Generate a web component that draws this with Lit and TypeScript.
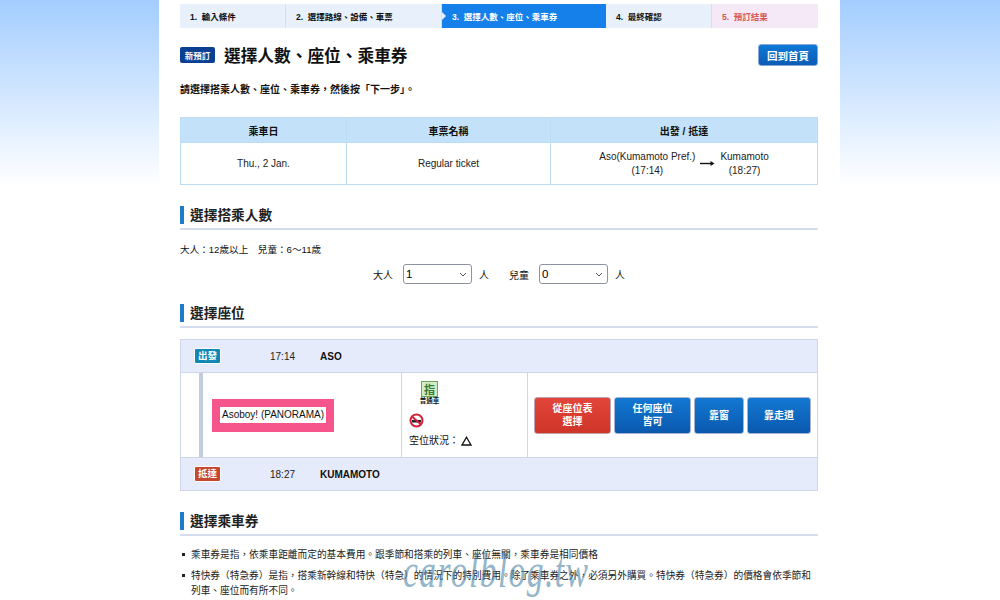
import { LitElement, css, html } from 'lit';
import { customElement } from 'lit/decorators.js';

const steps = [
  { label: '1.  輸入條件', width: 106, kind: '' },
  { label: '2.  選擇路線、設備、車票', width: 156, kind: '' },
  { label: '3.  選擇人數、座位、乘車券', width: 164, kind: 'active' },
  { label: '4.  最終確認', width: 106, kind: '' },
  { label: '5.  預訂結果', width: 106, kind: 'last' },
];

@customElement('app-root')
export class AppRoot extends LitElement {
  static styles = css`
    :host {
      display: block;
      height: 600px;
      overflow: hidden;
      position: relative;
      font-family: 'Liberation Sans', 'Noto Sans CJK TC', sans-serif;
      color: #111;
      background: linear-gradient(#a3cdff 0, #fff 186px);
    }
    .page {
      box-sizing: border-box;
      width: 681px;
      height: 600px;
      margin-left: 159px;
      padding: 4px 22px 0 21px;
      background: #fff;
    }

    /* 步驟 */
    .steps {
      display: flex;
      height: 24px;
    }
    .step {
      box-sizing: border-box;
      position: relative;
      display: flex;
      align-items: center;
      padding-left: 10px;
      font-size: 8.5px;
      font-weight: 700;
      white-space: pre;
      background: #e8f0fb;
      border-right: 1px solid #d6deea;
    }
    .step.active {
      background: #1580ea;
      color: #fff;
      border-right: none;
    }
    .step.last {
      background: #f6e9f7;
      color: #d8564e;
      border-right: none;
    }
    .step.active::after {
      content: '';
      position: absolute;
      right: -4px;
      top: 8px;
      border-left: 4px solid #1580ea;
      border-top: 4px solid transparent;
      border-bottom: 4px solid transparent;
    }
    .step.active::before {
      content: '';
      position: absolute;
      left: 0;
      top: 8px;
      border-left: 4px solid #e8f0fb;
      border-top: 4px solid transparent;
      border-bottom: 4px solid transparent;
    }

    /* 標題 */
    .title-row {
      display: flex;
      align-items: center;
      height: 22px;
      margin-top: 16px;
    }
    .badge {
      display: flex;
      align-items: center;
      justify-content: center;
      width: 35px;
      height: 16px;
      border-radius: 2px;
      background: #0b3f92;
      color: #fff;
      font-size: 8.5px;
      font-weight: 700;
      margin-right: 9px;
    }
    h1 {
      flex: 1;
      margin: 0;
      font-size: 16.7px;
      font-weight: 700;
    }
    .home {
      box-sizing: border-box;
      width: 60px;
      height: 22px;
      border: 1px solid #86a9da;
      border-radius: 3px;
      background: linear-gradient(#0f78d6, #0a5cb4);
      color: #fff;
      font-family: inherit;
      font-size: 10.5px;
      font-weight: 700;
      padding: 0;
    }
    .lead {
      margin: 16px 0 0;
      font-size: 10px;
      line-height: 16px;
      font-weight: 700;
    }

    /* 行程表 */
    table {
      box-sizing: border-box;
      width: 638px;
      margin-top: 19px;
      border-collapse: collapse;
      table-layout: fixed;
      font-size: 10px;
    }
    th,
    td {
      border: 1px solid #bcdcf4;
      text-align: center;
      padding: 0;
    }
    th {
      height: 24px;
      background: #c3e1f8;
      font-weight: 700;
    }
    td {
      height: 41px;
      line-height: 14px;
      color: #222;
    }
    .route {
      display: flex;
      align-items: center;
      justify-content: center;
      gap: 5px;
    }

    /* 區段標題 */
    h2 {
      margin: 0;
      height: 18px;
      padding-left: 6px;
      border-left: 4px solid #1c7cc7;
      font-size: 13.7px;
      line-height: 20px;
      font-weight: 700;
      color: #222;
    }
    .rule {
      height: 2px;
      margin-top: 4px;
      background: #d5dcee;
    }
    .first {
      margin-top: 21px;
    }
    .ages {
      margin: 13px 0 0;
      font-size: 9.6px;
      line-height: 14px;
    }
    .counts {
      display: flex;
      align-items: center;
      height: 20px;
      margin-top: 7px;
      padding-left: 193px;
      font-size: 10px;
    }
    select {
      box-sizing: border-box;
      appearance: none;
      width: 69px;
      height: 20px;
      margin: 0 7px 0 10px;
      padding: 0 0 0 2px;
      border: 1.5px solid #8d93a3;
      border-radius: 3px;
      background: #fff
        url("data:image/svg+xml,%3Csvg xmlns='http://www.w3.org/2000/svg' width='8' height='5'%3E%3Cpath d='M1 1l3 3 3-3' fill='none' stroke='%23555' stroke-width='1'/%3E%3C/svg%3E")
        no-repeat right 4px center;
      font-family: inherit;
      font-size: 11.5px;
    }
    .gap {
      width: 20px;
    }
    .second {
      margin-top: 20px;
    }
    .third {
      margin-top: 21px;
    }

    /* 列車 */
    .train {
      box-sizing: border-box;
      height: 152px;
      margin-top: 11px;
      border: 1px solid #cfd6ea;
      font-size: 10px;
    }
    .stop {
      display: flex;
      align-items: center;
      height: 32px;
      background: #e6ebfb;
    }
    .tag {
      box-sizing: border-box;
      width: 27px;
      height: 16px;
      margin-left: 13px;
      border: 1px solid #fff;
      border-radius: 2px;
      color: #fff;
      font-size: 9.5px;
      line-height: 14px;
      text-align: center;
      font-weight: 700;
    }
    .tag.dep {
      background: #1187b4;
    }
    .tag.arr {
      background: #c5472f;
    }
    .time {
      width: 50px;
      margin-left: 49px;
      color: #222;
    }
    .name {
      font-weight: 700;
    }
    .middle {
      box-sizing: border-box;
      display: grid;
      grid-template-columns: 221px 126px 1fr;
      height: 86px;
      border-top: 1px solid #cfd6ea;
      border-bottom: 1px solid #cfd6ea;
    }
    .line {
      display: flex;
      align-items: center;
      border-right: 1px solid #cfd6ea;
    }
    .rail {
      align-self: stretch;
      width: 4px;
      margin-left: 18px;
      background: #c3cbe0;
    }
    .pink {
      display: flex;
      align-items: center;
      justify-content: center;
      width: 122px;
      height: 33px;
      margin-left: 9px;
      background: #f5558a;
    }
    .pink span {
      padding: 0 2px;
      background: #fff;
      line-height: 16px;
    }
    .facts {
      display: flex;
      flex-direction: column;
      align-items: flex-start;
      padding: 8px 0 0 7px;
      border-right: 1px solid #cfd6ea;
    }
    .car {
      display: flex;
      flex-direction: column;
      align-items: center;
      width: 41px;
    }
    .seat {
      box-sizing: border-box;
      display: flex;
      align-items: center;
      justify-content: center;
      width: 17px;
      height: 16px;
      background: #d5eac8;
      border: 1.5px solid #6aa85c;
      color: #2f7d32;
      font-size: 11px;
      font-weight: 700;
    }
    .car small {
      font-size: 6.5px;
      line-height: 8px;
      font-weight: 700;
      white-space: nowrap;
    }
    .smoke {
      margin-top: 8px;
      height: 15px;
    }
    .vacancy {
      display: flex;
      align-items: center;
      gap: 2px;
      margin-top: 6px;
      line-height: 14px;
    }
    .actions {
      display: flex;
      align-items: center;
      gap: 3px;
      padding-left: 6px;
    }
    .pick {
      box-sizing: border-box;
      height: 37px;
      padding: 0;
      border: 1px solid #a6b4d2;
      border-radius: 3px;
      background: linear-gradient(#1378d2, #0a58ae);
      color: #fff;
      font-family: inherit;
      font-size: 10px;
      line-height: 13px;
      font-weight: 700;
    }
    .pick.red {
      background: linear-gradient(#e2463a, #cf3428);
      border-color: #c2a3ad;
    }

    /* 說明 */
    ul {
      list-style: none;
      margin: 11px 0 0;
      padding: 0;
      font-size: 9.7px;
      line-height: 15px;
      color: #222;
    }
    li {
      position: relative;
      padding-left: 11px;
      margin-bottom: 6px;
    }
    li::before {
      content: '';
      position: absolute;
      left: 2px;
      top: 6px;
      width: 3px;
      height: 3px;
      background: #222;
    }

    /* 浮水印 */
    .mark {
      position: absolute;
      left: 403px;
      top: 541px;
      font-family: 'Liberation Serif', serif;
      font-style: italic;
      font-size: 48px;
      line-height: 60px;
      letter-spacing: 2px;
      color: #4f86a8;
      opacity: 0.6;
      transform: scaleX(0.7);
      transform-origin: left top;
      white-space: nowrap;
      pointer-events: none;
    }
  `;

  render() {
    return html`
      <div class="page">
        <div class="steps">
          ${steps.map(
            (s) =>
              html`<div class="step ${s.kind}" style="width:${s.width}px">${s.label}</div>`,
          )}
        </div>

        <div class="title-row">
          <span class="badge">新預訂</span>
          <h1>選擇人數、座位、乘車券</h1>
          <button class="home">回到首頁</button>
        </div>
        <p class="lead">請選擇搭乘人數、座位、乘車券，然後按「下一步」。</p>

        <table>
          <colgroup>
            <col style="width:166px" />
            <col style="width:204px" />
            <col />
          </colgroup>
          <tr>
            <th>乘車日</th>
            <th>車票名稱</th>
            <th>出發 / 抵達</th>
          </tr>
          <tr>
            <td>Thu., 2 Jan.</td>
            <td>Regular ticket</td>
            <td>
              <div class="route">
                <span>Aso(Kumamoto Pref.)<br />(17:14)</span>
                <svg width="15" height="7" viewBox="0 0 15 7">
                  <path d="M0 3.5h11" stroke="#111" stroke-width="1.4" />
                  <path d="M10.5 1l4 2.5-4 2.5z" fill="#111" />
                </svg>
                <span>Kumamoto<br />(18:27)</span>
              </div>
            </td>
          </tr>
        </table>

        <h2 class="first">選擇搭乘人數</h2>
        <div class="rule"></div>
        <p class="ages">大人：12歲以上　兒童：6～11歲</p>
        <div class="counts">
          <span>大人</span>
          <select><option>1</option></select>
          <span>人</span>
          <span class="gap"></span>
          <span>兒童</span>
          <select><option>0</option></select>
          <span>人</span>
        </div>

        <h2 class="second">選擇座位</h2>
        <div class="rule"></div>
        <div class="train">
          <div class="stop">
            <span class="tag dep">出發</span>
            <span class="time">17:14</span>
            <span class="name">ASO</span>
          </div>
          <div class="middle">
            <div class="line">
              <div class="rail"></div>
              <div class="pink"><span>Asoboy! (PANORAMA)</span></div>
            </div>
            <div class="facts">
              <div class="car">
                <div class="seat">指</div>
                <small>普通車</small>
              </div>
              <svg class="smoke" width="15" height="15" viewBox="0 0 15 15">
                <path d="M3 7h9v2.5H3z" fill="#222" />
                <circle cx="7.5" cy="7.5" r="6" fill="none" stroke="#d3203c" stroke-width="2" />
                <path d="M3.2 3.7l8.6 7.6" stroke="#d3203c" stroke-width="2" />
              </svg>
              <div class="vacancy">
                <span>空位狀況：</span>
                <svg width="11" height="10" viewBox="0 0 11 10">
                  <path d="M5.5 1.2L10 9H1z" fill="none" stroke="#111" stroke-width="1.3" />
                </svg>
              </div>
            </div>
            <div class="actions">
              <button class="pick red" style="width:77px">從座位表<br />選擇</button>
              <button class="pick" style="width:77px">任何座位<br />皆可</button>
              <button class="pick" style="width:50px">靠窗</button>
              <button class="pick" style="width:64px">靠走道</button>
            </div>
          </div>
          <div class="stop">
            <span class="tag arr">抵達</span>
            <span class="time">18:27</span>
            <span class="name">KUMAMOTO</span>
          </div>
        </div>

        <h2 class="third">選擇乘車券</h2>
        <div class="rule"></div>
        <ul>
          <li>乘車券是指，依乘車距離而定的基本費用。跟季節和搭乘的列車、座位無關，乘車券是相同價格</li>
          <li>
            特快券（特急券）是指，搭乘新幹線和特快（特急）的情況下的特別費用。除了乘車券之外，必須另外購買。特快券（特急券）的價格會依季節和列車、座位而有所不同。
          </li>
        </ul>
      </div>
      <div class="mark">carolblog.tw</div>
    `;
  }
}
